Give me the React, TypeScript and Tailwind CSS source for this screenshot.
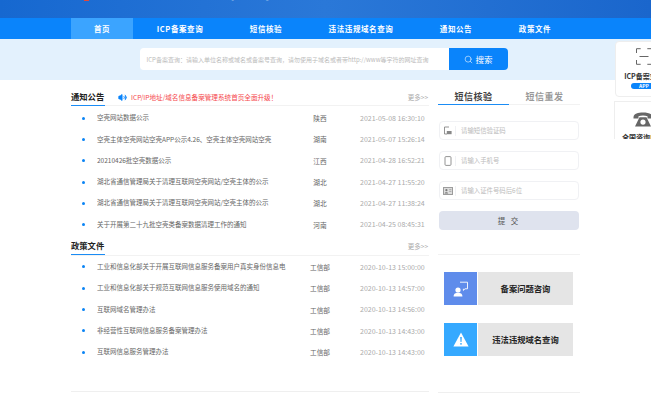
import { Search, Volume2 } from "lucide-react";

const font = "font-['Noto_Sans_CJK_SC','Liberation_Sans',sans-serif]";

const navItems = [
  { label: "首页", w: "w-[62px]", active: true },
  { label: "ICP备案查询", w: "w-[94px]" },
  { label: "短信核验", w: "w-[78px]" },
  { label: "违法违规域名查询", w: "w-[112px]" },
  { label: "通知公告", w: "w-[78px]" },
  { label: "政策文件", w: "w-[80px]" },
];

const notices = [
  ["空壳网站数据公示", "陕西", "2021-05-08 16:30:10"],
  ["空壳主体空壳网站空壳APP公示4.26、空壳主体空壳网站空壳", "湖南", "2021-05-07 15:26:14"],
  ["20210426批空壳数据公示", "江西", "2021-04-28 16:52:21"],
  ["湖北省通信管理局关于清理互联网空壳网站/空壳主体的公示", "湖北", "2021-04-27 11:55:20"],
  ["湖北省通信管理局关于清理互联网空壳网站/空壳主体的公示", "湖北", "2021-04-27 11:38:24"],
  ["关于开展第二十九批空壳类备案数据清理工作的通知", "河南", "2021-04-25 08:45:31"],
];

const policies = [
  ["工业和信息化部关于开展互联网信息服务备案用户真实身份信息电", "工信部", "2020-10-13 15:00:00"],
  ["工业和信息化部关于规范互联网信息服务使用域名的通知", "工信部", "2020-10-13 14:57:00"],
  ["互联网域名管理办法", "工信部", "2020-10-13 14:56:00"],
  ["非经营性互联网信息服务备案管理办法", "工信部", "2020-10-13 14:43:00"],
  ["互联网信息服务管理办法", "工信部", "2020-10-13 14:43:00"],
];

function Row({ row }: { row: string[] }) {
  return (
    <div className="flex items-center h-[21.3px] text-[6.5px] text-[#666]">
      <span className="ml-[11px] w-[3px] h-[3px] rounded-full bg-[#0a84f5]" />
      <span className="ml-[12px] w-[203px] whitespace-nowrap overflow-hidden">{row[0]}</span>
      <span className="w-[40px] text-center text-[6.7px] whitespace-nowrap">{row[1]}</span>
      <span className="ml-[20px] text-[7px] text-[#aaa] whitespace-nowrap">{row[2]}</span>
    </div>
  );
}

function Field({ icon, text }: { icon: React.ReactNode; text: string }) {
  return (
    <div className="flex items-center h-[19px] w-[140px] ml-[1px] rounded-sm border border-[#f0f1f4] bg-white">
      <span className="w-[16px] flex justify-center border-r border-[#f0f1f4] h-[10px] items-center">{icon}</span>
      <span className="ml-[5px] text-[6.4px] text-[#bbb] whitespace-nowrap">{text}</span>
    </div>
  );
}

function QuickLink({ icon, bg, text }: { icon: React.ReactNode; bg: string; text: string }) {
  return (
    <div className="flex ml-[6px] w-[129px] h-[33px]">
      <div className={`w-[33px] flex items-center justify-center ${bg}`}>{icon}</div>
      <div className="flex-1 ml-[1px] bg-[#e5e5e5] flex items-center justify-center text-[8.3px] font-bold text-[#222]">{text}</div>
    </div>
  );
}

export default function App() {
  return (
    <div className={`w-[651px] h-[400px] overflow-hidden bg-white relative ${font}`}>
      {/* banner */}
      <div className="h-[18px] bg-gradient-to-r from-[#1668d0] via-[#2a78d8] to-[#1a66cc] overflow-hidden relative">
        <span className="absolute left-[178px] top-[-21px] text-[17px] leading-[24px] font-bold text-white whitespace-nowrap">工业和信息化部政务服务平台</span>
        <span className="absolute left-[84px] top-0 w-[5px] h-[1px] bg-[#e0483c]" />
      </div>
      {/* nav */}
      <div className="h-[21px] bg-[#0a84fb] flex pl-[71px] pr-0">
        {navItems.map((n) => (
          <div
            key={n.label}
            className={`${n.w} flex items-center justify-center text-[7.5px] font-bold tracking-[0.6px] text-white whitespace-nowrap ${n.active ? "bg-[#3ba4ff]" : ""}`}
          >
            {n.label}
          </div>
        ))}
      </div>
      {/* search */}
      <div className="h-[41px] bg-[#e3f1fd] flex pt-[9px] pl-[140px]">
        <div className="w-[309px] h-[22px] bg-white rounded-l-sm flex items-center pl-[6.5px] text-[6px] text-[#bbb] whitespace-nowrap overflow-hidden">
          ICP备案查询：请输入单位名称或域名或备案号查询，请勿使用子域名或者带http://www等字符的网址查询
        </div>
        <div className="w-[59px] h-[22px] bg-[#0a84fb] rounded-r-sm flex items-center justify-center gap-[2px] text-white text-[8.5px]">
          <Search size={9} strokeWidth={1.5} />
          搜索
        </div>
      </div>
      {/* body */}
      <div className="flex pl-[71px] pt-[10px]">
        <div className="w-[358px]">
          <div className="flex items-center h-[16px] border-b border-[#f2f2f2]">
            <span className="h-[16px] w-[34px] border-b border-[#1a8cf5] text-[8.3px] font-bold text-[#222] whitespace-nowrap">通知公告</span>
            <Volume2 size={9} className="ml-[13px] text-[#0a84fb]" fill="#0a84fb" />
            <span className="ml-[4px] text-[6.6px] text-[#f5484d] whitespace-nowrap">ICP/IP地址/域名信息备案管理系统首页全面升级！</span>
            <span className="ml-auto mr-[1px] text-[6.5px] text-[#aaa] whitespace-nowrap">更多&gt;&gt;</span>
          </div>
          <div className="pt-[1.5px]">
            {notices.map((r, i) => (
              <Row key={i} row={r} />
            ))}
          </div>
          <div className="flex items-center h-[16px] border-b border-[#f2f2f2] mt-[4.5px]">
            <span className="h-[16px] w-[34px] border-b border-[#1a8cf5] text-[8.3px] font-bold text-[#222] whitespace-nowrap">政策文件</span>
            <span className="ml-auto mr-[1px] text-[6.5px] text-[#aaa] whitespace-nowrap">更多&gt;&gt;</span>
          </div>
          <div className="pt-[0.5px]">
            {policies.map((r, i) => (
              <Row key={i} row={r} />
            ))}
          </div>
          <div className="mt-[28.5px] w-[358px] border-b border-[#efefef]" />
        </div>
        <div className="w-[142px] ml-[9px] -mt-[3px]">
          <div className="flex h-[18px] border-b border-[#f2f2f2]">
            <span className="w-[71px] h-[18px] pt-[3px] text-center border-b border-[#1a8cf5] text-[9px] font-bold text-[#444] tracking-[0.5px]">短信核验</span>
            <span className="w-[71px] pt-[3px] text-center text-[9px] font-bold text-[#999] tracking-[0.5px]">短信重发</span>
          </div>
          <div className="mt-[16px] flex flex-col gap-[11px]">
            <Field
              text="请输短信验证码"
              icon={
                <svg width="9" height="9" viewBox="0 0 9 9" fill="none" stroke="#888" strokeWidth="0.9">
                  <path d="M6 1H1.5v7H4" />
                  <rect x="3.8" y="5" width="4.8" height="3.2" fill="#888" stroke="none" />
                </svg>
              }
            />
            <Field
              text="请输入手机号"
              icon={
                <svg width="8" height="10" viewBox="0 0 8 10" fill="none" stroke="#888" strokeWidth="0.9">
                  <rect x="1" y="0.6" width="6" height="8.8" rx="1" />
                </svg>
              }
            />
            <Field
              text="请输入证件号码后6位"
              icon={
                <svg width="10" height="8" viewBox="0 0 10 8">
                  <rect x="0.4" y="0.6" width="9.2" height="6.8" fill="#ddd" stroke="#888" strokeWidth="0.8" />
                  <circle cx="3.4" cy="3.2" r="1.1" fill="#777" />
                  <path d="M1.6 6.4c.3-1.5 3.2-1.5 3.6 0z" fill="#777" />
                  <path d="M6.2 2.6h2.2M6.2 4.4h2.2" stroke="#888" strokeWidth="0.6" />
                </svg>
              }
            />
          </div>
          <div className="mt-[11px] ml-[1px] w-[140px] h-[19px] rounded-sm bg-[#dfe3ee] flex items-center justify-center text-[7.5px] text-[#555] tracking-[2px]">提 交</div>
          <div className="mt-[24px] w-[142px] border-b border-[#f2f2f2]" />
          <div className="mt-[17px] flex flex-col gap-[18px]">
            <QuickLink
              bg="bg-[#5f8ceb]"
              text="备案问题咨询"
              icon={
                <svg width="16" height="16" viewBox="0 0 16 16" fill="none">
                  <path d="M7 1.2h7.5v6.6H12l-1.6 1.6V7.8" stroke="white" strokeWidth="0.9" />
                  <circle cx="5" cy="9" r="2.6" fill="white" />
                  <path d="M0.6 15.6c0-3 2-3.8 4.4-3.8s4.4.8 4.4 3.8z" fill="white" />
                </svg>
              }
            />
            <QuickLink
              bg="bg-[#35a9ff]"
              text="违法违规域名查询"
              icon={
                <svg width="16" height="15" viewBox="0 0 16 15">
                  <path d="M8 .5 15.6 14.4H.4z" fill="white" />
                  <path d="M7.2 5h1.6l-.3 5h-1z" fill="#35a9ff" />
                  <circle cx="8" cy="11.8" r="0.9" fill="#35a9ff" />
                </svg>
              }
            />
          </div>
          <div className="mt-[36px] w-[142px] border-b border-[#efefef]" />
        </div>
      </div>
      {/* side floating cards */}
      <div className="absolute left-[615px] top-[41px] w-[58px] h-[56px] rounded-sm bg-white border border-[#eee] flex flex-col items-center pt-[6px]">
        <svg width="16" height="17" viewBox="0 0 16 17" fill="none" stroke="#666" strokeWidth="1" className="shrink-0">
          <path d="M.5 5V.7h4.2M11.3.7h4.2V5M.5 12v4.3h4.2M11.3 16.300h4.200V12M3.500 8.500h9" />
        </svg>
        <span className="mt-[7px] text-[7px] leading-[9px] font-bold text-[#333] whitespace-nowrap">ICP备案查询</span>
        <span className="mt-[1.5px] px-[8px] rounded-full bg-[#0a84fb] text-white text-[5px] font-bold leading-[6.500px]">APP</span>
      </div>
      <div className="absolute left-[614px] top-[101px] w-[58px] h-[38px] bg-white border border-[#eee] border-b-0 overflow-hidden flex flex-col items-center pt-[10px]">
        <svg width="20" height="15" viewBox="0 0 20 15" fill="#666" className="shrink-0">
          <path d="M.5 5C1 1.500 5 .5 10 .5S19 1.500 19.500 5v1.500h-5V4.200c-2.500-.8-6.500-.8-9 0v2.300h-5z" />
          <path fillRule="evenodd" d="M6.500 5.200h7L18 14.500H2zM10 7.500a2.600 2.600 0 1 0 0 5.200 2.600 2.600 0 0 0 0-5.200z" />
        </svg>
        <span className="mt-[6px] text-[7px] leading-[9px] font-bold text-[#333] whitespace-nowrap">全国咨询电话</span>
      </div>
    </div>
  );
}
